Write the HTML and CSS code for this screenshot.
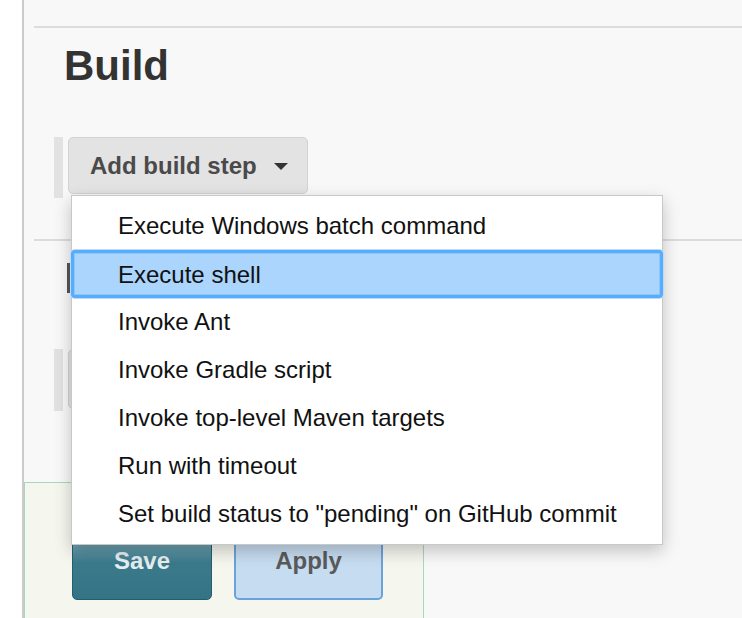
FILE: index.html
```html
<!DOCTYPE html>
<html>
<head>
<meta charset="utf-8">
<link rel="stylesheet" href="styles.css">
</head>
<body>
<div class="page">
  <div class="gutter"></div>
  <main class="main">
    <div class="rule rule-top"></div>
    <section class="build">
      <h2 class="title">Build</h2>
      <div class="step-row">
        <span class="handle"></span>
        <button class="add-btn">Add build step <span class="caret"></span></button>
      </div>
    </section>
    <div class="rule"></div>
    <section class="post">
      <span class="post-mark"></span>
      <div class="step-row step-row-post">
        <span class="handle handle-tall"></span>
        <button class="add-btn add-btn-tall" aria-label="Add post-build action"></button>
      </div>
    </section>
    <div class="bottom-bar">
      <button class="btn-save">Save</button>
      <button class="btn-apply">Apply</button>
    </div>
  </main>
</div>
<ul class="menu">
  <li class="item">Execute Windows batch command</li>
  <li class="item active">Execute shell</li>
  <li class="item">Invoke Ant</li>
  <li class="item">Invoke Gradle script</li>
  <li class="item">Invoke top-level Maven targets</li>
  <li class="item">Run with timeout</li>
  <li class="item">Set build status to "pending" on GitHub commit</li>
</ul>
</body>
</html>
```

FILE: styles.css
```css
html, body {
  margin: 0;
  padding: 0;
  height: 100%;
  background: #ffffff;
  overflow: hidden;
}
body {
  font-family: "Liberation Sans", Arial, sans-serif;
}
.page {
  display: flex;
  height: 618px;
}
.gutter {
  width: 22px;
  flex: none;
  background: #ffffff;
}
.main {
  flex: 1;
  background: #f8f8f8;
  border-left: 2px solid #cbcbcb;
  display: flex;
  flex-direction: column;
}
.rule {
  height: 2px;
  background: #dcdcdc;
  margin-left: 10px;
}
.rule-top {
  margin-top: 26px;
}
.build {
  padding-left: 30px;
  padding-bottom: 41px;
}
.title {
  margin: 17px 0 0 10px;
  font-size: 42px;
  line-height: 42px;
  font-weight: bold;
  color: #333333;
}
.step-row {
  display: flex;
  align-items: flex-start;
  gap: 5px;
  margin-top: 50px;
}
.handle {
  width: 9px;
  height: 61px;
  background: #e2e2e2;
  flex: none;
}
.handle-tall {
  height: 62px;
}
.add-btn {
  display: flex;
  align-items: center;
  height: 57px;
  box-sizing: border-box;
  padding: 0 19px 0 21px;
  background: #e3e3e3;
  border: 1px solid #d2d2d2;
  border-radius: 5px;
  font-family: "Liberation Sans", Arial, sans-serif;
  font-size: 24px;
  font-weight: bold;
  color: #4a4a4a;
  gap: 17px;
}
.add-btn-tall {
  height: 60px;
  width: 260px;
}
.caret {
  width: 0;
  height: 0;
  border-left: 7px solid transparent;
  border-right: 7px solid transparent;
  border-top: 7px solid #333333;
  margin-top: 2px;
}
.post {
  padding-left: 30px;
  height: 241px;
}
.post-mark {
  display: block;
  margin: 22px 0 0 13px;
  width: 3px;
  height: 30px;
  background: #555555;
}
.step-row-post {
  margin-top: 56px;
}
.bottom-bar {
  flex: 1;
  background: #f5f6ee;
  border-top: 1px solid #a9d6c0;
  border-left: 1px solid #a9d6c0;
  border-right: 1px solid #a9d6c0;
  padding: 39px 0 0 47px;
  display: flex;
  align-items: flex-start;
  gap: 22px;
  box-sizing: border-box;
  width: 400px;
}
.btn-save,
.btn-apply {
  height: 78px;
  box-sizing: border-box;
  border-radius: 5px;
  font-family: "Liberation Sans", Arial, sans-serif;
  font-size: 24px;
  font-weight: bold;
  padding: 0;
}
.btn-save {
  width: 140px;
  background: linear-gradient(#6fa2b0 0px, #6a9fae 22px, #3a7a8b 40px, #337385 78px);
  border: 1px solid #285d6b;
  color: #e6eef0;
}
.btn-apply {
  width: 149px;
  background: #c6dcf0;
  border: 2px solid #6aa3da;
  color: #5a5a5a;
}
.menu {
  position: absolute;
  left: 71px;
  top: 195px;
  width: 592px;
  box-sizing: border-box;
  margin: 0;
  padding: 6px 0 6px;
  list-style: none;
  background: #ffffff;
  border: 1px solid #c8c8c8;
  box-shadow: 0 6px 16px rgba(0, 0, 0, 0.22);
  font-family: "Liberation Sans", Arial, sans-serif;
  font-size: 24px;
  color: #111111;
}
.item {
  height: 48px;
  line-height: 47px;
  padding-left: 46px;
  white-space: nowrap;
}
.item.active {
  margin: 0 -1px;
  padding-left: 44px;
  height: 48px;
  line-height: 43px;
  box-sizing: border-box;
  background: #abd5fd;
  border: 3px solid #57adfa;
  border-radius: 4px;
  box-shadow: 0 0 0 1px #b9dcfc, inset 0 0 0 1px #8fc7fb;
}
```
